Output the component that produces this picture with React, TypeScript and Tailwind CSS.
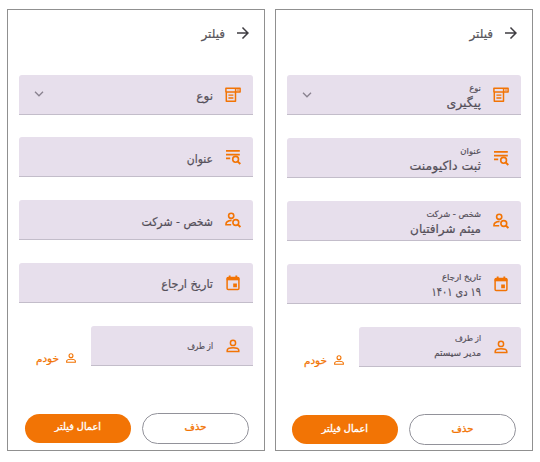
import type { ReactNode } from 'react';
import { MdArrowForward } from 'react-icons/md';

function TypeIcon() {
  return (
    <svg viewBox="0 0 16 16" className="size-4 shrink-0" fill="none" stroke="currentColor" strokeWidth="1.5">
      <path d="M.9 1.3h14.2v3.8H.9zM10.6 1.2v3.9M1.3 5v9.3h9.2V5" strokeLinejoin="round" />
      <path d="M3.4 8.2h5M3.4 11h5" strokeWidth="1.3" />
      <path d="M11.8 2.4h2.4l-1.2 1.8z" fill="currentColor" stroke="none" />
    </svg>
  );
}

function TitleIcon() {
  return (
    <svg viewBox="0 0 16 16" className="size-4 shrink-0" fill="none" stroke="currentColor" strokeWidth="1.6">
      <path d="M1 1.9h13.8M1 5.6h13.8M1 9.4h4.2" />
      <circle cx="10.6" cy="10.3" r="2.9" />
      <path d="M12.6 12.3l2.7 2.7" strokeWidth="1.9" />
    </svg>
  );
}

function PersonSearchIcon() {
  return (
    <svg viewBox="0 0 16 16" className="size-4 shrink-0" fill="none" stroke="currentColor" strokeWidth="1.6">
      <circle cx="6.2" cy="3.8" r="2.6" />
      <path d="M6.6 8.4C3.5 8.7 1 10.1 1 12v.7h5.2" />
      <circle cx="10.8" cy="10.5" r="2.9" />
      <path d="M12.8 12.5l2.6 2.6" strokeWidth="1.9" />
    </svg>
  );
}

function CalendarIcon() {
  return (
    <svg viewBox="0 0 16 16" className="size-4 shrink-0" fill="none" stroke="currentColor" strokeWidth="1.5">
      <rect x="2.1" y="2.4" width="11.8" height="12" rx="1" />
      <path d="M2.1 2h11.8v3.2H2.1zM3.8.6h1.8V3H3.8zM10.4.6h1.8V3h-1.8zM8.2 8.5h3.7v3.7H8.2z" fill="currentColor" stroke="none" />
      <path d="M1.6 4.2h12.8" strokeWidth="1.8" />
    </svg>
  );
}

function PersonIcon({ className }: { className: string }) {
  return (
    <svg viewBox="0 0 16 16" className={`shrink-0 ${className}`} fill="none" stroke="currentColor" strokeWidth="1.5">
      <circle cx="8" cy="4.9" r="2.6" />
      <path d="M2.2 13.6v-1.3C2.2 10.5 5.6 9.7 8 9.7s5.8.8 5.8 2.6v1.3z" />
    </svg>
  );
}

type FieldData = {
  icon: ReactNode;
  label: string;
  labelClass: string;
  smallClass: string;
  value: string;
  valueClass: string;
  select?: boolean;
};

const fields: FieldData[] = [
  { icon: <TypeIcon />, label: 'نوع', labelClass: 'text-[12px] pt-1', smallClass: 'text-[8.5px] pt-[3px]', value: 'پیگیری', valueClass: 'text-[12.5px]', select: true },
  { icon: <TitleIcon />, label: 'عنوان', labelClass: 'text-[12px] pt-1 scale-x-90', smallClass: 'text-[8.5px] pt-[3px]', value: 'ثبت داکیومنت', valueClass: 'text-[12.5px]' },
  { icon: <PersonSearchIcon />, label: 'شخص - شرکت', labelClass: 'text-[12px] pt-1 scale-x-[0.91]', smallClass: 'text-[8.5px] pt-[3px] scale-x-[0.98]', value: 'میثم شرافتیان', valueClass: 'text-[12px]' },
  { icon: <CalendarIcon />, label: 'تاریخ ارجاع', labelClass: 'text-[12px] pt-1 scale-x-[0.94]', smallClass: 'text-[8.5px] pt-[3px]', value: '۱۹ دی ۱۴۰۱', valueClass: 'text-[12px] scale-x-[0.81]' },
  { icon: <PersonIcon className="size-4" />, label: 'از طرف', labelClass: 'text-[9px] pt-px scale-x-[0.83]', smallClass: 'text-[8.5px] scale-x-[0.88]', value: 'مدیر سیستم', valueClass: 'text-[9px]' },
];

function Field({ field, filled }: { field: FieldData; filled: boolean }) {
  return (
    <div className="flex h-[40px] min-w-0 flex-1 items-center rounded-t-[3px] border-b border-[#c3bdca] bg-[#e7dfec] pr-3 pl-[15px] text-[#55505a]">
      <span className="flex w-4 shrink-0 justify-center pt-px text-[#f27405]">{field.icon}</span>
      <div className="mr-3 flex flex-1 flex-col whitespace-nowrap [-webkit-text-stroke:0.2px]">
        {filled ? (
          <>
            <span className={`origin-right leading-[13px] ${field.smallClass}`}>{field.label}</span>
            <span className={`origin-right leading-[16px] ${field.valueClass}`}>{field.value}</span>
          </>
        ) : (
          <span className={`origin-right leading-[16px] ${field.labelClass}`}>{field.label}</span>
        )}
      </div>
      {field.select && (
        <svg viewBox="0 0 10 6" className="h-[6px] w-[10px]" fill="none" stroke="#89828f" strokeWidth="1.3">
          <path d="M1 .8l4 4 4-4" />
        </svg>
      )}
    </div>
  );
}

function Panel({ filled }: { filled: boolean }) {
  return (
    <section className="flex h-[442px] w-[258px] flex-col border border-[#909090] bg-white px-[11px]">
      <header className="mt-[14px] flex h-[18px] items-center pr-[1px] text-[#3f3d42]">
        <MdArrowForward className="size-[18px]" />
        <h1 className="mr-[9px] pt-px text-[12px] leading-[18px] text-[#58555b] [-webkit-text-stroke:0.2px]">فیلتر</h1>
      </header>
      <div className={filled ? 'mt-[33px] flex flex-col gap-[23px]' : 'mt-[32.6px] flex flex-col gap-[22.8px]'}>
        {fields.map((field, i) => (
          <div key={field.label} className="flex">
            <Field field={field} filled={filled} />
            {i === fields.length - 1 && (
              <button className="flex w-[72px] items-center pt-[25px] pr-[14px] text-[#f27405]">
                <PersonIcon className="size-3" />
                <span className="mr-[6px] text-[10.5px] leading-[14px] [-webkit-text-stroke:0.25px]">خودم</span>
              </button>
            )}
          </div>
        ))}
      </div>
      <footer className={`flex gap-[11px] text-[10px] [-webkit-text-stroke:0.35px] ${filled ? 'mt-[47px] pr-[5px]' : 'mt-[47px] pr-[4px]'}`}>
        <button className="h-[31px] w-[107px] rounded-full border border-[#92929a] pb-[3px] text-[#f27405]">حذف</button>
        <button className="mt-px h-[29px] w-[106px] rounded-full bg-[#f27405] pb-[3px] text-white">
          <span className="inline-block scale-x-[0.97]">اعمال فیلتر</span>
        </button>
      </footer>
    </section>
  );
}

export default function App() {
  return (
    <main dir="rtl" className="flex h-[462px] w-[540px] items-start justify-end gap-[10px] bg-white pt-[9px] pl-[7px] font-['DejaVu_Sans','Noto_Sans',sans-serif]">
      <Panel filled />
      <Panel filled={false} />
    </main>
  );
}
